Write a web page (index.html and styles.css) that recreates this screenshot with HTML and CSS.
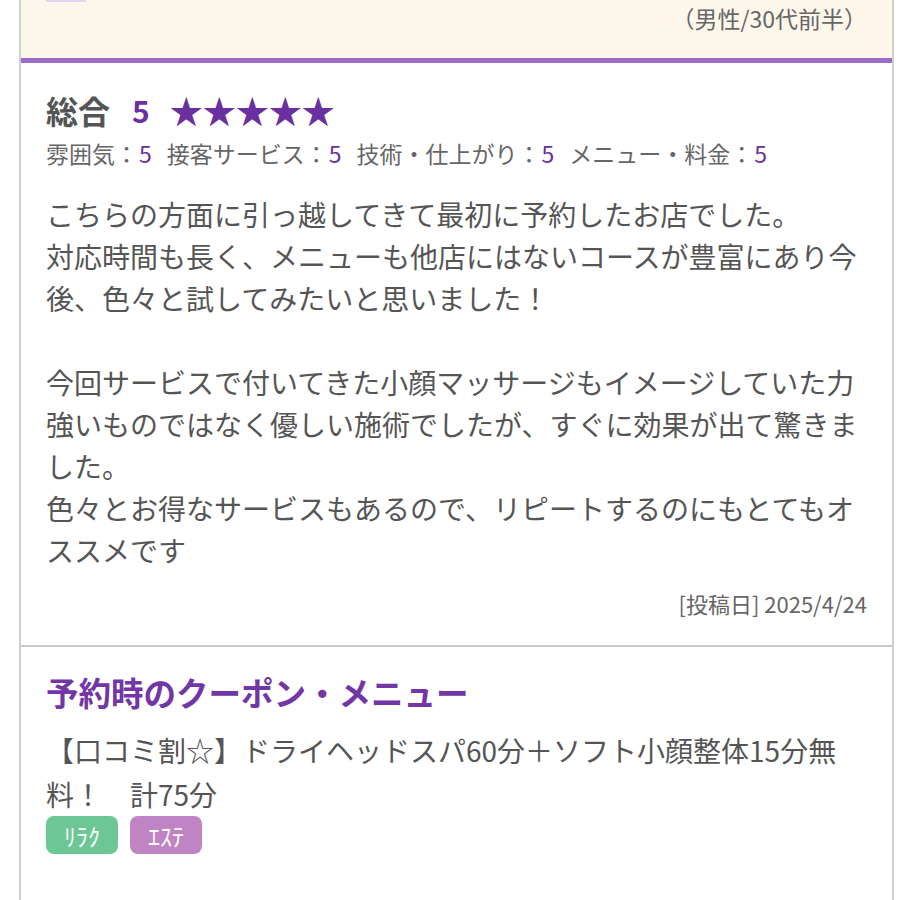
FILE: index.html
```html
<!DOCTYPE html>
<html lang="ja">
<head>
<meta charset="utf-8">
<title>口コミ</title>
<link rel="stylesheet" href="styles.css">
</head>
<body>
<div class="page">
  <div class="reviewer">
    <span class="prev-tag"></span>
    <p class="profile">（男性/30代前半）</p>
  </div>
  <section class="review">
    <div class="total">
      <span class="total-label">総合</span>
      <span class="total-score">5</span>
      <span class="stars">★★★★★</span>
    </div>
    <ul class="ratings">
      <li>雰囲気：<span class="num">5</span></li>
      <li>接客サービス：<span class="num">5</span></li>
      <li>技術・仕上がり：<span class="num">5</span></li>
      <li>メニュー・料金：<span class="num">5</span></li>
    </ul>
    <p class="body">こちらの方面に引っ越してきて最初に予約したお店でした。<br>対応時間も長く、メニューも他店にはないコースが豊富にあり今後、色々と試してみたいと思いました！<br><br>今回サービスで付いてきた小顔マッサージもイメージしていた力強いものではなく優しい施術でしたが、すぐに効果が出て驚きました。<br>色々とお得なサービスもあるので、リピートするのにもとてもオススメです</p>
    <p class="date">[投稿日] 2025/4/24</p>
  </section>
  <section class="coupon">
    <h2 class="coupon-title">予約時のクーポン・メニュー</h2>
    <p class="coupon-name">【口コミ割☆】ドライヘッドスパ60分＋ソフト小顔整体15分無料！　計75分</p>
    <div class="tags">
      <span class="tag tag-relax">ﾘﾗｸ</span>
      <span class="tag tag-este">ｴｽﾃ</span>
    </div>
  </section>
</div>
</body>
</html>
```

FILE: styles.css
```css
* {
  box-sizing: border-box;
}

html, body {
  margin: 0;
  padding: 0;
  background: #ffffff;
}

body {
  font-family: "Noto Sans CJK JP", "Noto Sans", sans-serif;
  color: #555555;
  height: 900px;
  overflow: hidden;
}

.page {
  margin-left: 19px;
  width: 875px;
  min-height: 900px;
  border-left: 2px solid #d0d0d0;
  border-right: 2px solid #d0d0d0;
  background: #ffffff;
}

.reviewer {
  background: #fdf6eb;
  padding: 0 25px 24px;
}

.prev-tag {
  display: block;
  width: 40px;
  height: 2px;
  background: #e2d3f2;
}

.profile {
  margin: 0;
  font-size: 23px;
  line-height: 32px;
  text-align: right;
  color: #666666;
}

.review {
  border-top: 5px solid #9a6cc6;
  border-bottom: 2px solid #c9c9c9;
  padding: 27px 25px 26px;
}

.total {
  display: flex;
  align-items: center;
  height: 40px;
}

.total-label {
  font-size: 32px;
  font-weight: 700;
  color: #555555;
  line-height: 40px;
}

.total-score {
  font-size: 30px;
  font-weight: 700;
  color: #6a2fa0;
  margin-left: 22px;
  line-height: 40px;
}

.stars {
  font-size: 33px;
  color: #6a2fa0;
  margin-left: 20px;
  line-height: 40px;
}

.ratings {
  list-style: none;
  margin: 6px 0 0;
  padding: 0;
  display: flex;
  gap: 15px;
  font-size: 23px;
  line-height: 34px;
  color: #666666;
}

.num {
  color: #6a2fa0;
  margin-left: 1px;
}

.body {
  margin: 23px 0 0;
  font-size: 28px;
  line-height: 42px;
  color: #555555;
}

.date {
  margin: 16px 0 0;
  font-size: 22px;
  line-height: 32px;
  text-align: right;
  color: #666666;
}

.coupon {
  padding: 23px 25px 0;
}

.coupon-title {
  margin: 0;
  font-size: 32.5px;
  font-weight: 700;
  line-height: 44px;
  color: #7236a6;
}

.coupon-name {
  margin: 14px 0 0;
  font-size: 28px;
  line-height: 44px;
  color: #555555;
}

.tags {
  display: flex;
  gap: 12px;
}

.tag {
  display: flex;
  align-items: center;
  justify-content: center;
  width: 72px;
  height: 38px;
  border-radius: 8px;
  color: #ffffff;
  font-size: 24px;
}

.tag-relax {
  background: #6cc794;
}

.tag-este {
  background: #c084c4;
}
```
